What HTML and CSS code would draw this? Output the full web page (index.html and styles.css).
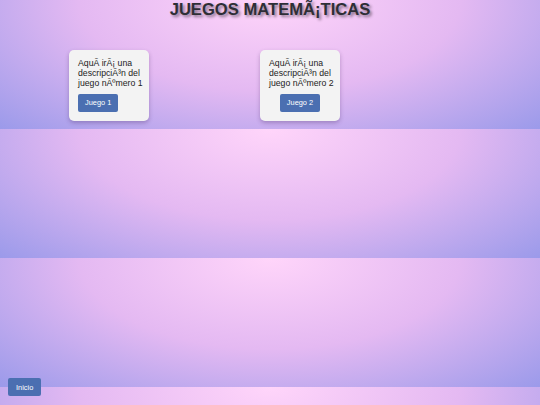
FILE: index.html
```html
<!DOCTYPE html>
<html lang="es">
<head>
  <meta charset="UTF-8">
  <title>Juegos Matemáticas</title>
  <meta name="viewport" content="width=device-width, initial-scale=1">
  <link rel="stylesheet" href="styles.css">
</head>
<body>
<h1>JUEGOS MATEM&Atilde;&iexcl;TICAS</h1>

<!-- Tarjetas de juegos -->
<div class="games">
  <div class="card">
    <p>Aqu&Atilde;&shy; ir&Atilde;&iexcl; una descripci&Atilde;&sup3;n del juego n&Atilde;&ordm;mero 1</p>
    <button class="btn">Juego 1</button>
  </div>
  <div class="card card-center">
    <p>Aqu&Atilde;&shy; ir&Atilde;&iexcl; una descripci&Atilde;&sup3;n del juego n&Atilde;&ordm;mero 2</p>
    <button class="btn">Juego 2</button>
  </div>
</div>

<button class="btn btn-home">Inicio</button>
</body>
</html>
```

FILE: styles.css
```css
body {
  margin: 0;
  font-family: "Liberation Sans", Arial, sans-serif;
  background: radial-gradient(ellipse at top, #ffd5fa 0%, #e4b9f2 50%, #9b9aea 100%);
  background-size: 100% 129px;
}
h1 {
  margin: 0;
  font-size: 16.6px;
  line-height: 19px;
  text-align: center;
  color: #2e2e36;
  text-shadow: 2px 2px 3px rgba(0, 0, 0, 0.45);
}
.games {
  display: flex;
  align-items: flex-start;
  gap: 111px;
  padding: 31px 0 9px 69px;
}
.card {
  width: 62px;
  padding: 8px 9px 9px;
  font-size: 8.7px;
  line-height: 10.2px;
  background: #f3f3f3;
  border-radius: 5px;
  box-shadow: 0 2px 4px rgba(60, 30, 90, 0.3);
}
.card p {
  margin: 0 -4px 5px 0;
  color: #222;
}
.card-center {
  text-align: center;
}
.card-center p {
  text-align: left;
}
.btn {
  height: 18px;
  padding: 0 7px;
  border: none;
  border-radius: 2px;
  background: #4b6fb1;
  color: #fff;
  font-family: "Liberation Sans", Arial, sans-serif;
  font-size: 7.4px;
  vertical-align: top;
  cursor: pointer;
}
.btn:hover {
  background: #3b5c9a;
}
.btn-home {
  position: fixed;
  left: 8px;
  bottom: 9px;
  padding: 0 8px;
}
```
